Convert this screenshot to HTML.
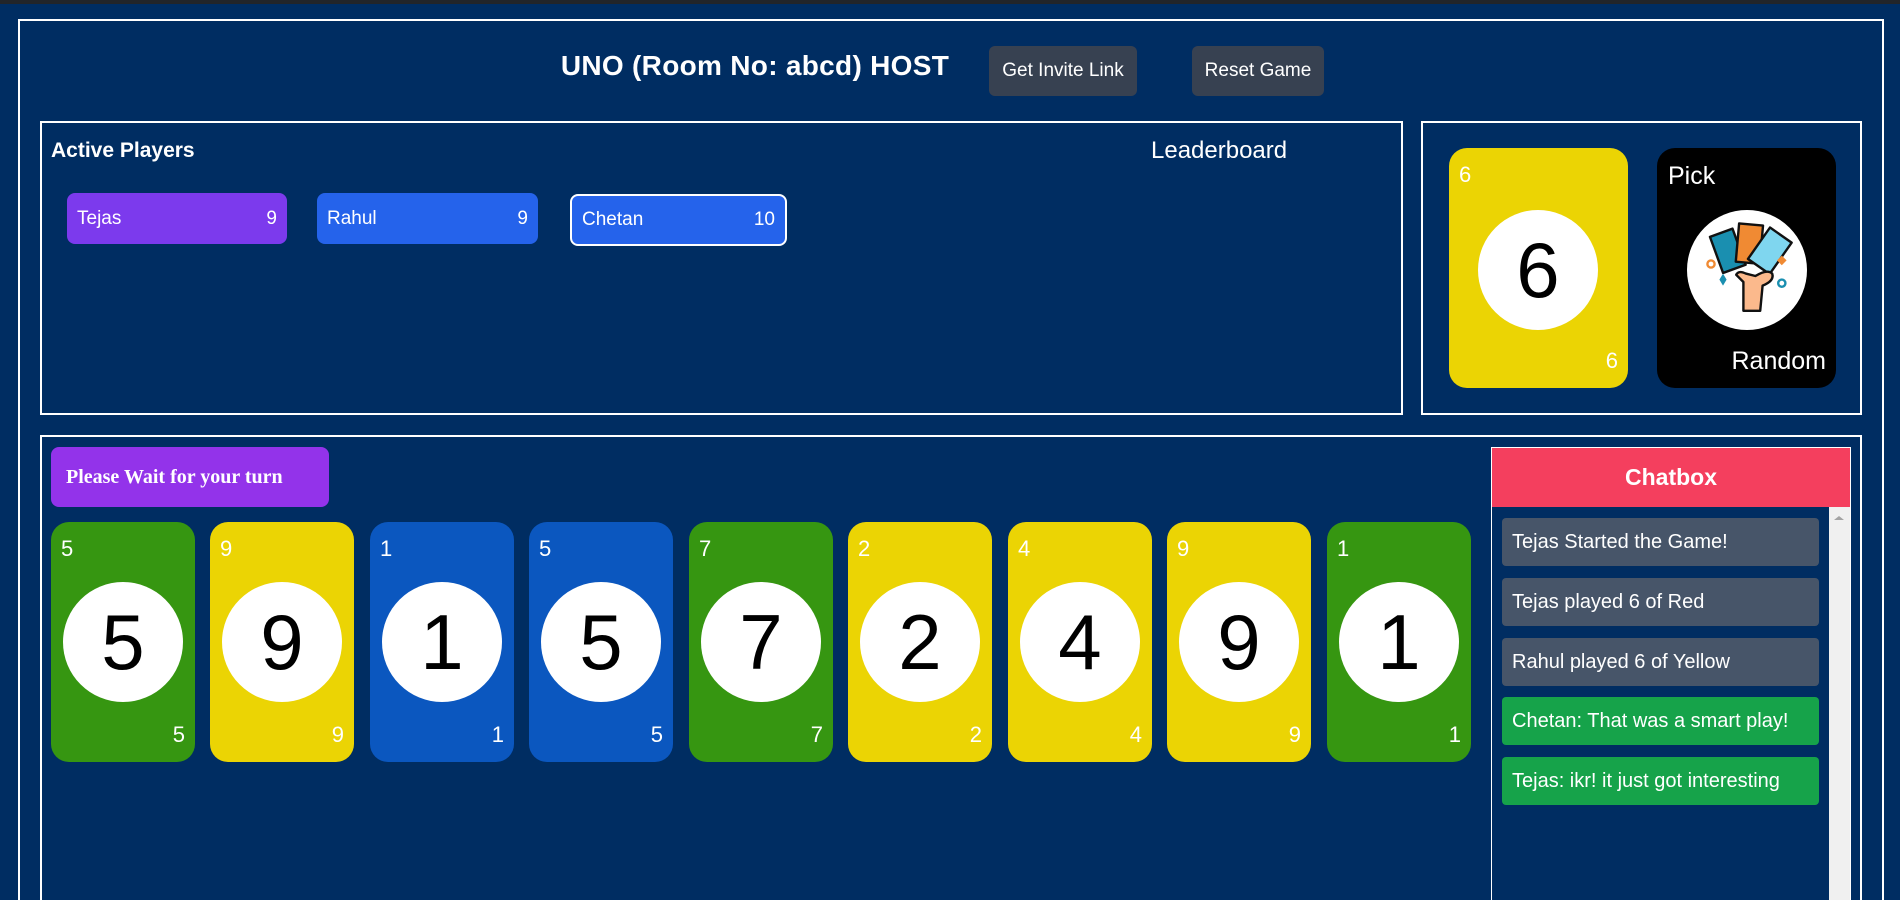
<!DOCTYPE html>
<html style="width:1900px;height:900px;overflow:hidden"><head><meta charset="utf-8"><style>
*{box-sizing:border-box;margin:0;padding:0}
body{width:1900px;height:900px;background:#002d62;font-family:"Liberation Sans",sans-serif;color:#fff;position:relative;overflow:hidden}
.abs{position:absolute}
.topbar{left:0;top:0;width:1900px;height:4px;background:#22252a}
.box{position:absolute;border:2px solid #fff}
.title{left:545px;top:46px;width:420px;text-align:center;font-weight:bold;font-size:28px;line-height:40px;letter-spacing:.3px}
.btn{position:absolute;background:#374151;border-radius:6px;font-size:19px;display:flex;align-items:center;justify-content:center}
.chip{position:absolute;height:51px;border-radius:8px;font-size:19px;display:flex;align-items:center;justify-content:space-between;padding:0 10px}
.card{position:absolute;width:144px;height:240px;border-radius:18px}
.card .tl{position:absolute;left:10px;top:14px;font-size:22px}
.card .br{position:absolute;right:10px;bottom:14px;font-size:22px}
.card .c{position:absolute;left:12px;top:60px;width:120px;height:120px;border-radius:50%;background:#fff;color:#000;font-size:78px;display:flex;align-items:center;justify-content:center}
.g{background:#369611}.y{background:#ebd404}.b{background:#0b57bf}
.msg{position:absolute;left:1502px;width:317px;height:48px;border-radius:4px;font-size:20px;padding-left:10px;display:flex;align-items:center}
</style></head><body>
<div class="abs topbar"></div>
<div class="box" style="left:18px;top:19px;width:1866px;height:881px;border-bottom:none"></div>
<div class="abs title">UNO (Room No: abcd) HOST</div>
<div class="btn" style="left:989px;top:46px;width:148px;height:50px">Get Invite Link</div>
<div class="btn" style="left:1192px;top:46px;width:132px;height:50px">Reset Game</div>

<div class="box" style="left:40px;top:121px;width:1363px;height:294px"></div>
<div class="abs" style="left:51px;top:139px;font-weight:bold;font-size:21px">Active Players</div>
<div class="abs" style="left:1151px;top:137px;font-size:24px">Leaderboard</div>
<div class="chip" style="left:67px;top:193px;width:220px;background:#7c3aed"><span>Tejas</span><span>9</span></div>
<div class="chip" style="left:317px;top:193px;width:221px;background:#2563eb"><span>Rahul</span><span>9</span></div>
<div class="chip" style="left:570px;top:194px;width:217px;height:52px;background:#2563eb;border:2px solid #fff"><span>Chetan</span><span>10</span></div>

<div class="box" style="left:1421px;top:121px;width:441px;height:294px"></div>
<div class="card y" style="left:1449px;top:148px;width:179px;height:240px"><span class="tl">6</span><span class="br">6</span><div class="c" style="left:29px;top:62px">6</div></div>
<div class="card" style="left:1657px;top:148px;width:179px;height:240px;background:#000">
<span class="abs" style="left:11px;top:14px;font-size:25px">Pick</span>
<span class="abs" style="right:10px;bottom:12px;font-size:25px">Random</span>
<div class="c" style="left:30px;top:62px;width:120px;height:120px">
<svg width="120" height="120" viewBox="0 0 100 100">
<g stroke="#111" stroke-width="2" stroke-linejoin="round">
<rect x="24" y="18" width="20" height="32" fill="#1a8fb0" transform="rotate(-20 34 34)"/>
<rect x="42" y="12" width="20" height="32" fill="#f08a33" transform="rotate(5 52 28)"/>
<rect x="58" y="18" width="22" height="32" fill="#7fd6ef" transform="rotate(35 69 34)"/>
<path d="M47 84 L47 60 L41 54 Q43 50 49 53 L57 55 Q67 49 71 53 Q73 59 63 63 L61 84 Z" fill="#fbb98c"/>
</g>
<circle cx="20" cy="45" r="3" fill="none" stroke="#f08a33" stroke-width="2"/>
<circle cx="79" cy="61" r="3" fill="none" stroke="#1a8fb0" stroke-width="2"/>
<path d="M27 58 l3 -5 l3 5 l-3 5z" fill="#1a8fb0"/>
<path d="M75 42 l4 -4 l4 4 l-4 4z" fill="#f08a33"/>
</svg></div></div>

<div class="box" style="left:40px;top:435px;width:1822px;height:465px;border-bottom:none"></div>
<div class="abs" style="left:51px;top:447px;width:278px;height:60px;border-radius:8px;background:#9333ea;font-family:'Liberation Serif',serif;font-weight:bold;font-size:20px;display:flex;align-items:center;padding-left:15px">Please Wait for your turn</div>

<div class="card g" style="left:51px;top:522px"><span class="tl">5</span><span class="br">5</span><div class="c">5</div></div>
<div class="card y" style="left:210px;top:522px"><span class="tl">9</span><span class="br">9</span><div class="c">9</div></div>
<div class="card b" style="left:370px;top:522px"><span class="tl">1</span><span class="br">1</span><div class="c">1</div></div>
<div class="card b" style="left:529px;top:522px"><span class="tl">5</span><span class="br">5</span><div class="c">5</div></div>
<div class="card g" style="left:689px;top:522px"><span class="tl">7</span><span class="br">7</span><div class="c">7</div></div>
<div class="card y" style="left:848px;top:522px"><span class="tl">2</span><span class="br">2</span><div class="c">2</div></div>
<div class="card y" style="left:1008px;top:522px"><span class="tl">4</span><span class="br">4</span><div class="c">4</div></div>
<div class="card y" style="left:1167px;top:522px"><span class="tl">9</span><span class="br">9</span><div class="c">9</div></div>
<div class="card g" style="left:1327px;top:522px"><span class="tl">1</span><span class="br">1</span><div class="c">1</div></div>

<div class="abs" style="left:1491px;top:447px;width:360px;height:453px;border:1px solid #fff;border-bottom:none"></div>
<div class="abs" style="left:1492px;top:448px;width:358px;height:59px;background:#f43f5e;font-weight:bold;font-size:23px;display:flex;align-items:center;justify-content:center">Chatbox</div>
<div class="abs" style="left:1829px;top:507px;width:21px;height:393px;background:#f0f0f0"></div>
<div class="abs" style="left:1834px;top:516px;width:0;height:0;border-left:5px solid transparent;border-right:5px solid transparent;border-bottom:4px solid #a3a3a3"></div>
<div class="msg" style="top:518px;background:#475569">Tejas Started the Game!</div>
<div class="msg" style="top:578px;background:#475569">Tejas played 6 of Red</div>
<div class="msg" style="top:638px;background:#475569">Rahul played 6 of Yellow</div>
<div class="msg" style="top:697px;background:#16a34a">Chetan: That was a smart play!</div>
<div class="msg" style="top:757px;background:#16a34a">Tejas: ikr! it just got interesting</div>
</body></html>
